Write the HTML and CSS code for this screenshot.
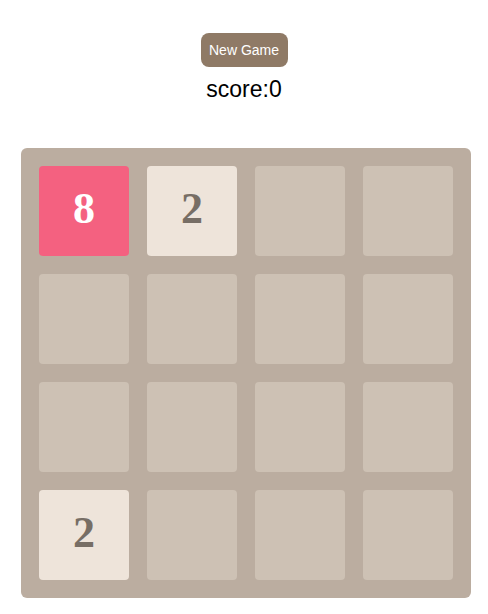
FILE: index.html
```html
<!DOCTYPE html>
<html lang="en">
<head>
<meta charset="utf-8">
<title>2048</title>
<link rel="stylesheet" href="styles.css">
</head>
<body>
  <div class="header">
    <button class="new-game">New Game</button>
    <p class="score">score:<span id="score">0</span></p>
  </div>
  <div class="board">
    <div class="cell tile-8">8</div>
    <div class="cell tile-2">2</div>
    <div class="cell"></div>
    <div class="cell"></div>

    <div class="cell"></div>
    <div class="cell"></div>
    <div class="cell"></div>
    <div class="cell"></div>

    <div class="cell"></div>
    <div class="cell"></div>
    <div class="cell"></div>
    <div class="cell"></div>

    <div class="cell tile-2">2</div>
    <div class="cell"></div>
    <div class="cell"></div>
    <div class="cell"></div>
  </div>
</body>
</html>
```

FILE: styles.css
```css
body {
  margin: 0;
  font-family: "Liberation Sans", Arial, sans-serif;
  background-color: white;
}
.header {
  display: flex;
  flex-direction: column;
  align-items: center;
  padding-top: 33px;
}
.new-game {
  width: 87px;
  height: 34px;
  padding: 0;
  border: none;
  border-radius: 8px;
  background-color: #8f7a66;
  color: white;
  font-family: "Liberation Sans", Arial, sans-serif;
  font-size: 14px;
}
.score {
  margin: 9px 0 0;
  font-size: 23px;
  line-height: 26px;
  color: black;
}
/* 4x4 grid of 90px cells with 18px gutters */
.board {
  display: grid;
  grid-template-columns: repeat(4, 90px);
  grid-auto-rows: 90px;
  gap: 18px;
  padding: 18px;
  width: 414px;
  margin: 46px 0 0 21px;
  background-color: #bbada0;
  border-radius: 6px;
}
.cell {
  border-radius: 4px;
  background-color: #cdc1b4;
  display: flex;
  align-items: center;
  justify-content: center;
  padding-bottom: 6px;
  box-sizing: border-box;
  font-family: "Liberation Serif", "Times New Roman", serif;
  font-weight: bold;
  font-size: 44px;
  color: #776e65;
}
.tile-2 {
  background-color: #eee4da;
}
.tile-8 {
  background-color: #f46180;
  color: white;
}
```
